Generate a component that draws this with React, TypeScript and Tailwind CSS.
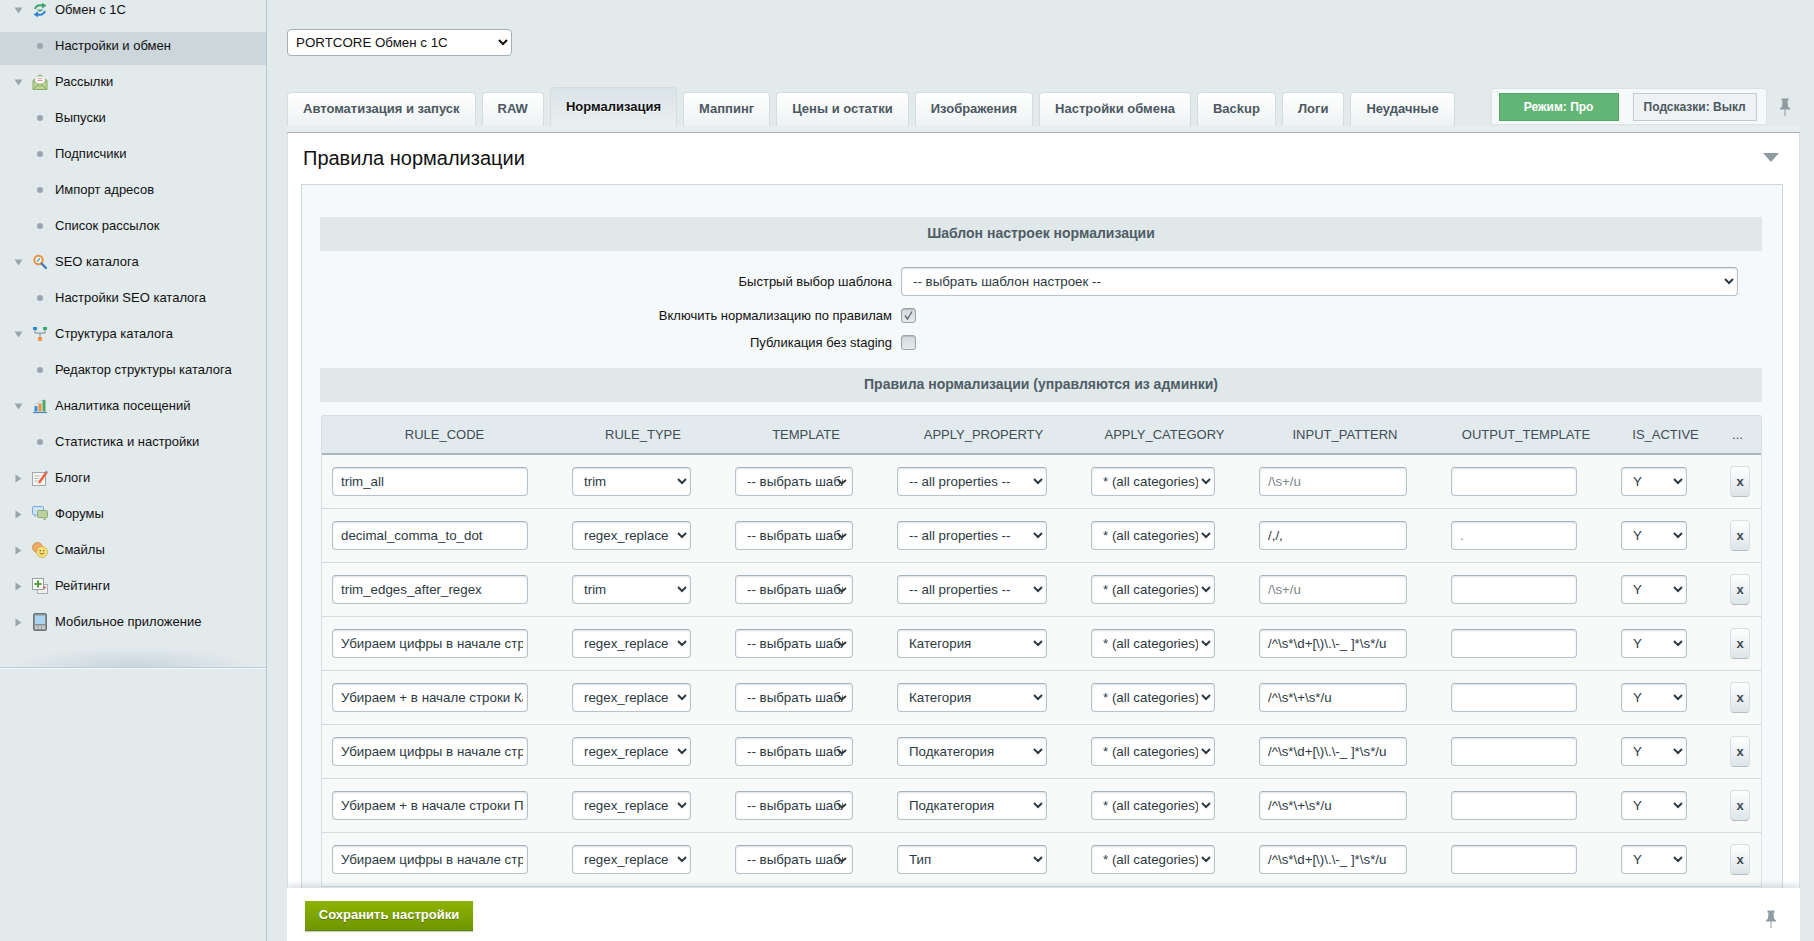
import React from "react";

const FONT = "font-['Liberation_Sans',Arial,sans-serif]";

function TriDown() {
  return (
    <svg width="9" height="7" viewBox="0 0 9 7" className="shrink-0">
      <path d="M0.5 0.5h8L4.5 6.5z" fill="#9aa5ab" />
    </svg>
  );
}

function TriRight() {
  return (
    <svg width="9" height="9" viewBox="0 0 9 9" className="shrink-0">
      <path d="M1.5 0.5v8l6-4z" fill="#9aa5ab" />
    </svg>
  );
}

function IconExchange() {
  return (
    <svg width="16" height="16" viewBox="0 0 16 16">
      <path d="M3 7c1-3.200 4-4.200 7.500-3.600" fill="none" stroke="#3fa66a" strokeWidth="2" />
      <path d="M10 .8 14.500 3.600 10 6.400z" fill="#3fa66a" />
      <path d="M13 9c-1 3.200-4 4.200-7.500 3.600" fill="none" stroke="#2f7fd0" strokeWidth="2" />
      <path d="M6 15.200 1.500 12.400 6 9.600z" fill="#2f7fd0" />
      <path d="M5 7.500h6.500L9 9.500H6.500z" fill="#4fa58a" />
    </svg>
  );
}

function IconMail() {
  return (
    <svg width="17" height="18" viewBox="0 0 17 18">
      <path d="M1 7.500 8.500 1 16 7.500V17H1z" fill="#b9d48f" stroke="#7d9f5d" strokeWidth="0.8" />
      <rect x="3.500" y="3.500" width="10" height="7" fill="#fff" stroke="#c9d3c2" strokeWidth="0.5" />
      <path d="M5.500 5.500h6M5.500 7.500h6" stroke="#d98a92" strokeWidth="0.9" />
      <path d="M1 7.500 8.500 13 16 7.500M1 17l6-5.500M16 17l-6-5.500" fill="none" stroke="#7d9f5d" strokeWidth="0.8" />
    </svg>
  );
}

function IconSeo() {
  return (
    <svg width="16" height="16" viewBox="0 0 16 16">
      <circle cx="6.500" cy="6" r="4.200" fill="#eef4f3" stroke="#e8923a" strokeWidth="2" />
      <path d="M5 7.500 8 4.500" stroke="#5a9bd5" strokeWidth="1.200" />
      <path d="M9.500 9.500 14 14" stroke="#3f78b5" strokeWidth="2.200" strokeLinecap="round" />
    </svg>
  );
}

function IconTree() {
  return (
    <svg width="16" height="16" viewBox="0 0 16 16">
      <path d="M3 4v3h10V4M8 7v6" fill="none" stroke="#7b8a93" strokeWidth="1" />
      <rect x="1" y="1" width="4" height="3" fill="#2f86d6" />
      <rect x="11" y="1" width="4" height="3" fill="#3aa76d" />
      <rect x="6" y="11" width="4" height="4" fill="#ef9a3a" />
    </svg>
  );
}

function IconChart() {
  return (
    <svg width="16" height="16" viewBox="0 0 16 16">
      <rect x="2.500" y="8" width="3" height="5.500" fill="#3a8fd8" />
      <rect x="6.500" y="5.500" width="3" height="8" fill="#e8923a" />
      <rect x="10.500" y="2" width="3" height="11.500" fill="#4fa868" />
      <path d="M1 14.500h14" stroke="#4a88c7" strokeWidth="1.200" />
      <path d="M2 7 7 4l5-3" fill="none" stroke="#b7c3ca" strokeWidth="0.700" />
    </svg>
  );
}

function IconBlog() {
  return (
    <svg width="16" height="16" viewBox="0 0 16 16">
      <rect x="0.500" y="2.500" width="13" height="13" fill="#f4f4f2" stroke="#a2a9ac" />
      <path d="M2.500 6h5M2.500 8.500h4M2.500 11h3" stroke="#b5bbbd" />
      <path d="M6 12 13.500 1.500l2 1.500L8 13.500z" fill="#e8663a" />
      <path d="M6 12l2 1.500-2.500.7z" fill="#f3c79a" />
      <path d="M13.500 1.500l2 1.500 .5-.8-1.800-1.600z" fill="#5b8fc4" />
    </svg>
  );
}

function IconForum() {
  return (
    <svg width="16" height="16" viewBox="0 0 16 16">
      <path d="M.5 1.500Q.5.500 1.500.500h9q1 0 1 1v6q0 1-1 1H5L3 10.500V8.500H1.500q-1 0-1-1z" fill="#cfe3f6" stroke="#5d9ad6" strokeWidth="0.800" />
      <path d="M5.500 5.500q0-1 1-1h8q1 0 1 1v5q0 1-1 1H13v2.500l-2.500-2.500h-4q-1 0-1-1z" fill="#b9d29e" stroke="#7d9e63" strokeWidth="0.800" />
    </svg>
  );
}

function IconSmile() {
  return (
    <svg width="16" height="16" viewBox="0 0 16 16">
      <circle cx="5.500" cy="5.500" r="5" fill="#eeaa66" stroke="#c98544" strokeWidth="0.700" />
      <circle cx="10" cy="10" r="5.500" fill="#f7e17a" stroke="#c9a83e" strokeWidth="0.700" />
      <circle cx="8.200" cy="8.800" r="0.800" fill="#6d5a1d" />
      <circle cx="11.800" cy="8.800" r="0.800" fill="#6d5a1d" />
      <path d="M7.500 11q2.500 2.300 5 0" fill="none" stroke="#6d5a1d" strokeWidth="0.800" />
    </svg>
  );
}

function IconRating() {
  return (
    <svg width="16" height="16" viewBox="0 0 16 16">
      <rect x="5.500" y="6.500" width="10" height="9" fill="#f1f1ef" stroke="#a9afb2" />
      <rect x="0.500" y="0.500" width="11" height="11" fill="#f8f8f6" stroke="#9aa1a5" />
      <path d="M6 2.500v7M2.500 6h7" stroke="#55a03a" strokeWidth="2" />
      <rect x="11.500" y="8.500" width="2" height="2" fill="#d8443a" />
    </svg>
  );
}

function IconMobile() {
  return (
    <svg width="14" height="18" viewBox="0 0 14 18">
      <rect x="0.500" y="0.500" width="13" height="17" rx="1.200" fill="#8a9296" stroke="#6c7478" />
      <rect x="2" y="2.500" width="10" height="8.500" fill="#a9d3ef" />
      <rect x="2" y="12.500" width="10" height="3.500" fill="#c6ccce" />
      <path d="M5 12.500V16M8.500 12.500V16" stroke="#80888c" strokeWidth="0.700" />
    </svg>
  );
}

function Pin() {
  return (
    <svg width="12" height="18" viewBox="0 0 12 18">
      <path d="M2.500 0.500h7v2H8.500l.5 6 2 2v1H1v-1l2-2 .5-6H2.500z" fill="#8f9ba1" />
      <path d="M6 11.500V18" stroke="#8f9ba1" strokeWidth="1" />
    </svg>
  );
}

type NavItem = { label: string; icon?: React.ReactNode; open?: boolean; active?: boolean };

const NAV: NavItem[] = [
  { label: "Обмен с 1С", icon: <IconExchange />, open: true },
  { label: "Настройки и обмен", active: true },
  { label: "Рассылки", icon: <IconMail />, open: true },
  { label: "Выпуски" },
  { label: "Подписчики" },
  { label: "Импорт адресов" },
  { label: "Список рассылок" },
  { label: "SEO каталога", icon: <IconSeo />, open: true },
  { label: "Настройки SEO каталога" },
  { label: "Структура каталога", icon: <IconTree />, open: true },
  { label: "Редактор структуры каталога" },
  { label: "Аналитика посещений", icon: <IconChart />, open: true },
  { label: "Статистика и настройки" },
  { label: "Блоги", icon: <IconBlog /> },
  { label: "Форумы", icon: <IconForum /> },
  { label: "Смайлы", icon: <IconSmile /> },
  { label: "Рейтинги", icon: <IconRating /> },
  { label: "Мобильное приложение", icon: <IconMobile /> },
];

const TABS = [
  "Автоматизация и запуск",
  "RAW",
  "Нормализация",
  "Маппинг",
  "Цены и остатки",
  "Изображения",
  "Настройки обмена",
  "Backup",
  "Логи",
  "Неудачные",
];

const HEADERS = [
  "RULE_CODE",
  "RULE_TYPE",
  "TEMPLATE",
  "APPLY_PROPERTY",
  "APPLY_CATEGORY",
  "INPUT_PATTERN",
  "OUTPUT_TEMPLATE",
  "IS_ACTIVE",
  "...",
];

const DIGITS = "/^\\s*\\d+[\\)\\.\\-_ ]*\\s*/u";
const PLUS = "/^\\s*\\+\\s*/u";
const SPACES = "/\\s+/u";
const ALL = "-- all properties --";

const RULES = [
  { code: "trim_all", type: "trim", prop: ALL, pattern: SPACES, output: "", muted: true },
  { code: "decimal_comma_to_dot", type: "regex_replace", prop: ALL, pattern: "/,/,", output: ".", muted: false },
  { code: "trim_edges_after_regex", type: "trim", prop: ALL, pattern: SPACES, output: "", muted: true },
  { code: "Убираем цифры в начале строки Категория", type: "regex_replace", prop: "Категория", pattern: DIGITS, output: "", muted: false },
  { code: "Убираем + в начале строки Категория", type: "regex_replace", prop: "Категория", pattern: PLUS, output: "", muted: false },
  { code: "Убираем цифры в начале строки Подкатегория", type: "regex_replace", prop: "Подкатегория", pattern: DIGITS, output: "", muted: false },
  { code: "Убираем + в начале строки Подкатегория", type: "regex_replace", prop: "Подкатегория", pattern: PLUS, output: "", muted: false },
  { code: "Убираем цифры в начале строки Тип", type: "regex_replace", prop: "Тип", pattern: DIGITS, output: "", muted: false },
];

const FIELD =
  "h-[29px] rounded-[4px] border border-[#b7c2ca] border-t-[#a5b1ba] bg-white text-[13.33px] text-[#2d3a42] shadow-[inset_0_1px_2px_rgba(180,188,191,0.45)] outline-none";

function Field({ value, className, muted }: { value: string; className: string; muted?: boolean }) {
  return (
    <input
      readOnly
      value={value}
      className={`${FIELD} pl-[8px] pr-[4px] ${muted ? "text-[#7d878d]" : ""} ${className}`}
    />
  );
}

function Choice({ value, className, options }: { value: string; className: string; options?: string[] }) {
  return (
    <select defaultValue={value} className={`${FIELD} pl-[7px] ${className}`}>
      {(options ?? [value]).map((o) => (
        <option key={o}>{o}</option>
      ))}
    </select>
  );
}

// текст шаблона в узкой колонке заезжает под стрелку, поэтому стрелка поверх select
function TemplateChoice() {
  return (
    <div className="relative w-[118px]">
      <select defaultValue="-- выбрать шаблон --" className={`${FIELD} block w-full appearance-none pr-[9px] pl-[11px]`}>
        <option>-- выбрать шаблон --</option>
      </select>
      <svg width="10" height="6" viewBox="0 0 10 6" className="pointer-events-none absolute top-[12px] right-[6px]">
        <path d="M1 1l4 3.500L9 1" fill="none" stroke="#2d3a42" strokeWidth="2" />
      </svg>
    </div>
  );
}

function Check({ checked }: { checked?: boolean }) {
  return (
    <span className="flex h-[15px] w-[15px] items-center justify-center rounded-[3px] border border-[#9aa5ab] bg-gradient-to-b from-[#d3dadd] to-[#e6ebed] shadow-[inset_0_1px_1px_rgba(120,130,135,0.35)]">
      {checked && (
        <svg width="11" height="11" viewBox="0 0 11 11">
          <path d="M2 5.500 4.500 9 9 1.500" fill="none" stroke="#5c676d" strokeWidth="1.300" />
        </svg>
      )}
    </span>
  );
}

function SidebarRow({ item }: { item: NavItem }) {
  return (
    <div
      className={`flex items-center ${
        item.active ? "mt-[4px] mb-[-1px] h-[33px] bg-[#ccd6db] pb-[5px]" : "h-[36px]"
      }`}
    >
      <span className="flex w-[32px] shrink-0 justify-center pl-[4px]">
        {item.icon && (item.open ? <TriDown /> : <TriRight />)}
      </span>
      <span className="flex w-[16px] shrink-0 items-center justify-center">
        {item.icon ?? <span className="h-[6px] w-[6px] rounded-full bg-[#9aa6ae]" />}
      </span>
      <span className="ml-[7px] text-[13px] whitespace-nowrap text-[#111]">{item.label}</span>
    </div>
  );
}

function Sidebar() {
  return (
    <aside className="w-[267px] shrink-0 border-r border-[#b3c6d6]">
      <nav className="mt-[-8px]">
        {NAV.map((item) => (
          <SidebarRow key={item.label} item={item} />
        ))}
      </nav>
      <div className="mt-[5px] h-[22px] bg-[radial-gradient(ellipse_at_bottom,#c8d5dd_0%,rgba(200,213,221,0)_65%)]" />
      <div className="h-[2px] border-t border-[#bcccd6] bg-[#f4f7f8]" />
    </aside>
  );
}

function Tabs() {
  return (
    <div className="flex items-end">
      <div className="flex items-end gap-[6px]">
        {TABS.map((tab) => {
          const active = tab === "Нормализация";
          return (
            <div
              key={tab}
              className={`flex items-center justify-center rounded-t-[4px] border border-b-0 px-[15px] text-[13px] font-bold whitespace-nowrap ${
                active
                  ? "h-[39px] border-[#d3dde0] bg-gradient-to-b from-[#dbe4e7] to-[#e9eff1] pb-[1px] text-[#111] [text-shadow:0_1px_0_#fff]"
                  : "h-[34px] border-[#d3dcdf] bg-gradient-to-b from-white to-[#eef2f3] pb-[2px] text-[#4b5860]"
              }`}
            >
              {tab}
            </div>
          );
        })}
      </div>
      <div className="mb-[1px] ml-[36px] flex h-[37px] w-[276px] shrink-0 items-center rounded-[3px] border border-[#dbe3e6] bg-[#f6f9f9] pl-[7px]">
        <span className="flex h-[28px] w-[120px] items-center justify-center border border-[#57a868] bg-[#62b574] text-[12px] font-bold text-white">
          Режим: Про
        </span>
        <span className="ml-[14px] flex h-[28px] w-[124px] items-center justify-center border border-[#c3ccd2] bg-[#eef2f4] text-[12px] font-bold text-[#4b5860]">
          Подсказки: Выкл
        </span>
      </div>
      <span className="mb-[10px] ml-[12px]">
        <Pin />
      </span>
    </div>
  );
}

function Band({ children, className }: { children: React.ReactNode; className?: string }) {
  return (
    <div className={`flex h-[34px] items-center justify-center bg-[#e0e8ea] pb-[1px] text-[14px] font-bold text-[#4f5d65] ${className ?? ""}`}>
      {children}
    </div>
  );
}

function RulesTable() {
  return (
    <table className="ml-[1px] w-[1440px] table-fixed border-separate border-spacing-0 rounded-t-[3px] border border-b-0 border-[#d6dfe3]">
      <colgroup>
        <col className="w-[245px]" />
        <col className="w-[152px]" />
        <col className="w-[174px]" />
        <col className="w-[181px]" />
        <col className="w-[181px]" />
        <col className="w-[180px]" />
        <col className="w-[182px]" />
        <col className="w-[97px]" />
        <col className="w-[47px]" />
      </colgroup>
      <thead>
        <tr>
          {HEADERS.map((h) => (
            <th
              key={h}
              className="h-[39px] border-b-2 border-[#aab6bd] bg-[#e3eaed] text-center text-[13px] font-normal text-[#3f4d56]"
            >
              {h}
            </th>
          ))}
        </tr>
      </thead>
      <tbody>
        {RULES.map((r) => (
          <tr key={r.code} className="h-[54px] bg-[#f8fafa]">
            <td className="border-b border-[#d2dde1] pl-[10px]">
              <Field value={r.code} className="block w-[196px]" />
            </td>
            <td className="border-b border-[#d2dde1] pl-[5px]">
              <Choice value={r.type} options={["trim", "regex_replace"]} className="block w-[119px]" />
            </td>
            <td className="border-b border-[#d2dde1] pl-[16px]">
              <TemplateChoice />
            </td>
            <td className="border-b border-[#d2dde1] pl-[4px]">
              <Choice value={r.prop} className="block w-[150px]" />
            </td>
            <td className="border-b border-[#d2dde1] pl-[17px]">
              <Choice value="* (all categories)" className="block w-[124px]" />
            </td>
            <td className="border-b border-[#d2dde1] pl-[4px]">
              <Field value={r.pattern} muted={r.muted} className="block w-[148px]" />
            </td>
            <td className="border-b border-[#d2dde1] pl-[16px]">
              <Field value={r.output} muted className="block w-[126px]" />
            </td>
            <td className="border-b border-[#d2dde1] pl-[4px]">
              <Choice value="Y" options={["Y", "N"]} className="block w-[66px]" />
            </td>
            <td className="border-b border-[#d2dde1] pl-[16px]">
              <button className="block h-[31px] w-[20px] rounded-[4px] border border-[#d7dfe2] border-b-[#b4bfc5] bg-gradient-to-b from-white to-[#dde5e8] text-[13px] font-bold text-[#3c4a54]">
                x
              </button>
            </td>
          </tr>
        ))}
      </tbody>
    </table>
  );
}

export default function App() {
  return (
    <div className={`flex h-[941px] w-[1814px] overflow-hidden bg-[#e3eaec] ${FONT}`}>
      <Sidebar />
      <main className="flex w-[1533px] flex-col pl-[20px]">
        <div className="flex h-[87px] shrink-0 items-start pt-[29px]">
          <select defaultValue="PORTCORE Обмен с 1С" className="h-[27px] w-[225px] rounded-[4px] border border-[#a3aeb6] bg-white pl-[4px] text-[13.33px] text-[#111]">
            <option>PORTCORE Обмен с 1С</option>
          </select>
        </div>
        <Tabs />
        <div className="flex min-h-0 flex-1 flex-col overflow-hidden">
          <div className="h-[7px] shrink-0 border-b border-[#a5b1b7] bg-[#e8edef]" />
          <section className="flex-1 overflow-hidden border-x border-[#d9e1e4] bg-white">
            <div className="flex h-[51px] items-center justify-between pr-[20px] pb-[2px] pl-[15px]">
              <h1 className="text-[20px] font-normal text-[#111]">Правила нормализации</h1>
              <svg width="16" height="9" viewBox="0 0 16 9">
                <path d="M0 0h16L8 9z" fill="#8f9ba1" />
              </svg>
            </div>
            <div className="ml-[13px] w-[1482px] border border-b-0 border-[#cdd8dd] bg-[#f5f9f9] pt-[32px] pr-[20px] pb-[40px] pl-[18px]">
              <Band>Шаблон настроек нормализации</Band>
              <div className="mt-[16px] flex items-center gap-[9px]">
                <span className="w-[572px] text-right text-[13px] text-[#111]">Быстрый выбор шаблона</span>
                <select defaultValue="-- выбрать шаблон настроек --" className={`${FIELD} w-[837px] pl-[7px]`}>
                  <option>-- выбрать шаблон настроек --</option>
                </select>
              </div>
              <div className="mt-[12px] flex h-[15px] items-center gap-[9px]">
                <span className="w-[572px] text-right text-[13px] text-[#111]">Включить нормализацию по правилам</span>
                <Check checked />
              </div>
              <div className="mt-[12px] flex h-[15px] items-center gap-[9px]">
                <span className="w-[572px] text-right text-[13px] text-[#111]">Публикация без staging</span>
                <Check />
              </div>
              <Band className="mt-[18px]">Правила нормализации (управляются из админки)</Band>
              <div className="mt-[13px]">
                <RulesTable />
              </div>
            </div>
          </section>
          <footer className="relative z-10 flex h-[53px] w-[1513px] shrink-0 items-start justify-between bg-white pt-[13px] pr-[23px] pl-[18px] shadow-[0_-3px_6px_rgba(150,165,175,0.35)]">
            <button className="h-[30px] w-[168px] border-b border-[#5f8200] bg-gradient-to-b from-[#8db400] to-[#709600] pb-[1px] text-[13px] font-bold text-white shadow-[0_1px_1px_rgba(0,0,0,0.2)] [text-shadow:0_1px_1px_rgba(0,0,0,0.3)]">
              Сохранить настройки
            </button>
            <span className="mt-[9px]">
              <Pin />
            </span>
          </footer>
        </div>
      </main>
    </div>
  );
}
